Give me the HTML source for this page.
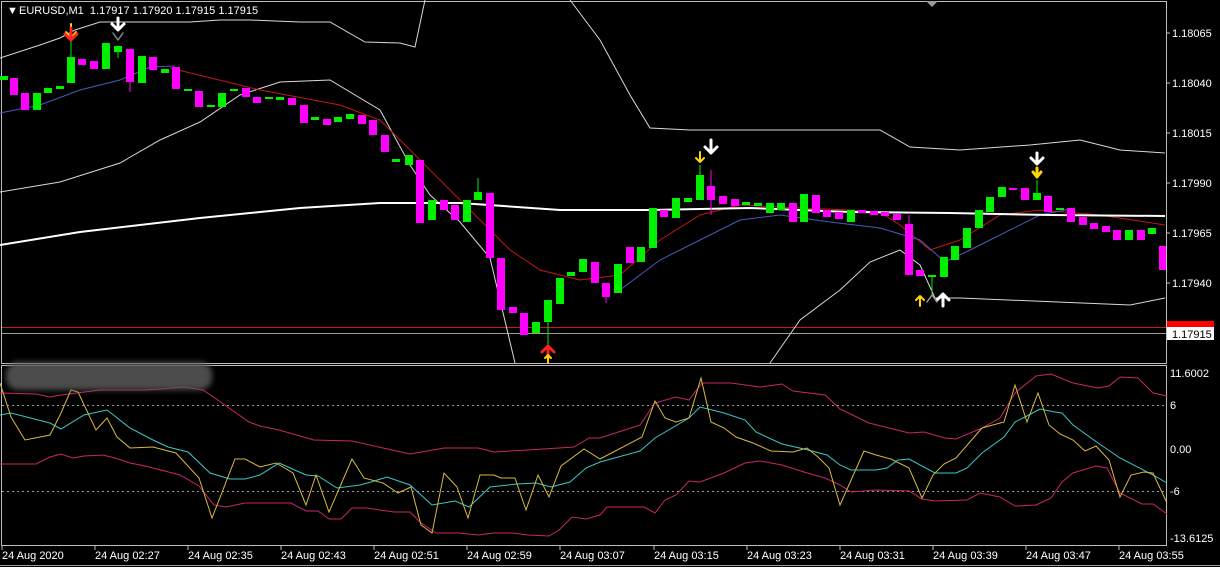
<!DOCTYPE html><html><head><meta charset="utf-8"><style>
html,body{margin:0;padding:0;background:#000;width:1220px;height:567px;overflow:hidden}
svg{display:block;font-family:"Liberation Sans",sans-serif}
.g{fill:#00f000}.m{fill:#ff00ff}
text{fill:#fff;font-size:11px}
</style></head><body>
<svg width="1220" height="567" viewBox="0 0 1220 567">
<rect width="1220" height="567" fill="#000"/>
<!-- frames -->
<rect x="1.5" y="1.5" width="1165" height="362" fill="none" stroke="#bdbdbd" stroke-width="1"/>
<rect x="1.5" y="365.5" width="1165" height="180" fill="none" stroke="#bdbdbd" stroke-width="1"/>
<polygon points="926,1 938,1 932,7" fill="#9a9a9a"/>
<!-- horizontal lines -->
<line x1="2" y1="327.5" x2="1166" y2="327.5" stroke="#d01818"/>
<line x1="2" y1="333.5" x2="1166" y2="333.5" stroke="#9a9a9a"/>
<!-- bands -->
<g fill="none" stroke-width="1">
<polyline stroke="#d8d8d8" points="0,58 40,45 60,38 75,30 100,22 190,22 220,20 250,20 300,22 330,22 365,42 400,43 415,47 425,0"/>
<polyline stroke="#d8d8d8" points="570,0 600,40 630,95 650,128 690,130 880,130 910,147 960,150 1030,145 1080,140 1120,150 1165,153"/>
<polyline stroke="#d8d8d8" points="0,192 60,182 120,163 160,140 200,122 240,95 280,82 330,80 380,110 410,165 430,195 460,222 490,258 500,300 515,363"/>
<polyline stroke="#d8d8d8" points="770,363 800,320 840,290 870,262 900,250 920,265 935,298 960,298 1130,305 1165,298"/>
<polyline stroke="#c01818" points="170,68 260,90 340,105 380,120 420,160 470,210 510,250 540,270 580,280 620,275 660,240 700,215 740,205 800,208 850,210 880,212 900,225 930,250 960,240 1000,215 1040,210 1100,215 1165,225"/>
<polyline stroke="#4a5ab8" points="0,113 40,105 80,90 120,80 150,67 175,66"/>
<polyline stroke="#4a5ab8" points="620,290 660,260 700,240 740,220 780,215 830,222 880,228 920,240 945,262 970,250 990,240 1040,215 1075,208"/>
<polyline stroke="#ffffff" stroke-width="2" points="0,245 80,232 200,218 300,208 380,203 460,203 560,210 650,210 750,208 850,212 950,213 1050,215 1165,216"/>
</g>
<!-- wicks -->
<g stroke-width="1">
<line x1="71" y1="35" x2="71" y2="57" stroke="#00f000"/>
<line x1="130" y1="82" x2="130" y2="92" stroke="#ff00ff"/>
<line x1="118" y1="52" x2="118" y2="58" stroke="#00f000"/>
<line x1="548" y1="322" x2="548" y2="345" stroke="#00f000"/>
<line x1="700" y1="165" x2="700" y2="175" stroke="#00f000"/>
<line x1="711" y1="170" x2="711" y2="215" stroke="#ff00ff"/>
<line x1="909" y1="215" x2="909" y2="224" stroke="#ff00ff"/>
<line x1="932" y1="277" x2="932" y2="295" stroke="#00f000"/>
<line x1="1037" y1="180" x2="1037" y2="193" stroke="#00f000"/>
<line x1="478" y1="178" x2="478" y2="192" stroke="#00f000"/>
<line x1="606" y1="297" x2="606" y2="303" stroke="#ff00ff"/>
</g>
<!-- candles -->
<g>
<rect class="g" x="0" y="76" width="8" height="4"/><rect class="m" x="10" y="78" width="8" height="17"/><rect class="m" x="21" y="93" width="8" height="17"/><rect class="g" x="33" y="93" width="8" height="17"/><rect class="g" x="44" y="88" width="8" height="5"/><rect class="g" x="56" y="86" width="8" height="3"/><rect class="g" x="67" y="57" width="8" height="26"/><rect class="m" x="78" y="59" width="8" height="6"/><rect class="m" x="90" y="61" width="8" height="8"/><rect class="g" x="102" y="43" width="8" height="26"/><rect class="g" x="114" y="46" width="8" height="6"/><rect class="m" x="126" y="49" width="8" height="33"/><rect class="g" x="138" y="56" width="8" height="27"/><rect class="m" x="149" y="57" width="8" height="13"/><rect class="g" x="161" y="69" width="8" height="4"/><rect class="m" x="172" y="67" width="8" height="22"/><rect class="g" x="184" y="89" width="8" height="2"/><rect class="m" x="195" y="91" width="8" height="16"/><rect class="g" x="207" y="105" width="8" height="2"/><rect class="g" x="218" y="93" width="8" height="14"/><rect class="g" x="230" y="89" width="8" height="2"/><rect class="m" x="242" y="88" width="8" height="9"/><rect class="m" x="253" y="97" width="8" height="6"/><rect class="g" x="265" y="97" width="8" height="2"/><rect class="g" x="276" y="97" width="8" height="3"/><rect class="m" x="288" y="98" width="8" height="7"/><rect class="m" x="300" y="105" width="8" height="18"/><rect class="g" x="311" y="117" width="8" height="3"/><rect class="m" x="323" y="119" width="8" height="6"/><rect class="g" x="334" y="117" width="8" height="5"/><rect class="g" x="346" y="114" width="8" height="5"/><rect class="m" x="358" y="115" width="8" height="9"/><rect class="m" x="369" y="120" width="8" height="15"/><rect class="m" x="381" y="135" width="8" height="17"/><rect class="g" x="392" y="159" width="8" height="3"/><rect class="g" x="405" y="155" width="8" height="10"/><rect class="m" x="416" y="160" width="8" height="63"/><rect class="g" x="428" y="200" width="8" height="20"/><rect class="m" x="440" y="200" width="8" height="10"/><rect class="m" x="451" y="205" width="8" height="15"/><rect class="g" x="463" y="200" width="8" height="22"/><rect class="g" x="474" y="192" width="8" height="8"/><rect class="m" x="486" y="193" width="8" height="65"/><rect class="m" x="497" y="258" width="8" height="52"/><rect class="m" x="509" y="307" width="8" height="6"/><rect class="m" x="520" y="313" width="8" height="22"/><rect class="g" x="532" y="322" width="8" height="11"/><rect class="g" x="544" y="300" width="8" height="22"/><rect class="g" x="556" y="278" width="8" height="26"/><rect class="g" x="567" y="272" width="8" height="4"/><rect class="g" x="579" y="259" width="8" height="13"/><rect class="m" x="591" y="262" width="8" height="21"/><rect class="m" x="602" y="283" width="8" height="14"/><rect class="g" x="614" y="264" width="8" height="29"/><rect class="m" x="626" y="247" width="8" height="16"/><rect class="g" x="637" y="247" width="8" height="15"/><rect class="g" x="649" y="208" width="8" height="40"/><rect class="m" x="660" y="210" width="8" height="7"/><rect class="g" x="672" y="198" width="8" height="20"/><rect class="g" x="684" y="198" width="8" height="4"/><rect class="g" x="696" y="175" width="8" height="25"/><rect class="m" x="707" y="186" width="8" height="14"/><rect class="m" x="719" y="196" width="8" height="8"/><rect class="m" x="731" y="199" width="8" height="7"/><rect class="g" x="742" y="202" width="8" height="3"/><rect class="g" x="754" y="203" width="8" height="3"/><rect class="g" x="766" y="203" width="8" height="10"/><rect class="g" x="777" y="203" width="8" height="7"/><rect class="m" x="789" y="203" width="8" height="19"/><rect class="g" x="800" y="194" width="8" height="28"/><rect class="m" x="812" y="195" width="8" height="18"/><rect class="m" x="823" y="210" width="8" height="7"/><rect class="m" x="835" y="212" width="8" height="7"/><rect class="g" x="847" y="210" width="8" height="12"/><rect class="m" x="858" y="210" width="8" height="3"/><rect class="m" x="870" y="211" width="8" height="4"/><rect class="m" x="881" y="212" width="8" height="4"/><rect class="m" x="893" y="214" width="8" height="6"/><rect class="m" x="905" y="224" width="8" height="51"/><rect class="m" x="916" y="270" width="8" height="6"/><rect class="g" x="928" y="275" width="8" height="2"/><rect class="g" x="940" y="257" width="8" height="20"/><rect class="g" x="951" y="246" width="8" height="14"/><rect class="g" x="963" y="228" width="8" height="20"/><rect class="g" x="975" y="210" width="8" height="18"/><rect class="g" x="986" y="197" width="8" height="15"/><rect class="g" x="998" y="187" width="8" height="10"/><rect class="m" x="1009" y="188" width="8" height="2"/><rect class="m" x="1021" y="188" width="8" height="12"/><rect class="g" x="1033" y="193" width="8" height="7"/><rect class="m" x="1044" y="196" width="8" height="16"/><rect class="g" x="1056" y="208" width="8" height="2"/><rect class="m" x="1067" y="208" width="8" height="14"/><rect class="m" x="1079" y="217" width="8" height="8"/><rect class="m" x="1090" y="223" width="8" height="6"/><rect class="m" x="1102" y="226" width="8" height="6"/><rect class="m" x="1113" y="230" width="8" height="10"/><rect class="g" x="1125" y="230" width="8" height="10"/><rect class="m" x="1137" y="230" width="8" height="10"/><rect class="g" x="1148" y="228" width="8" height="6"/><rect class="m" x="1159" y="246" width="7" height="24"/>
</g>
<!-- arrows -->
<g stroke-linecap="round" stroke-linejoin="round" fill="none">
<path d="M71 24 V38 M66 32 L71 38 L76 32" stroke="#ffd800" stroke-width="2"/>
<path d="M71 28 V40 M65 34 L71 40 L77 34" stroke="#ff2020" stroke-width="3"/>
<path d="M118 18 V30 M112 24 L118 30 L124 24" stroke="#fff" stroke-width="3"/>
<path d="M113 33 L118 40 L123 33" stroke="#888" stroke-width="1.5"/>
<path d="M700 152 V162 M696 158 L700 162 L704 158" stroke="#ffd800" stroke-width="2"/>
<path d="M711 140 V153 M705 147 L711 153 L717 147" stroke="#fff" stroke-width="3"/>
<path d="M1037 153 V164 M1031 158 L1037 164 L1043 158" stroke="#fff" stroke-width="3"/>
<path d="M1037 168 V177 M1033 172 L1037 177 L1041 172" stroke="#ffd800" stroke-width="3"/>
<path d="M548 346 V358 M542 352 L548 346 L554 352" stroke="#ff2020" stroke-width="3"/>
<path d="M548 355 V363 M545 358 L548 355 L551 358" stroke="#ffd800" stroke-width="2"/>
<path d="M920 296 V306 M916 300 L920 296 L924 300" stroke="#ffd800" stroke-width="2"/>
<path d="M943 294 V306 M937 300 L943 294 L949 300" stroke="#fff" stroke-width="3"/>
<path d="M927 302 L932 295 L937 302" stroke="#999" stroke-width="1.5"/>
</g>
<text x="7" y="14" font-size="11">&#9660;</text>
<text x="19" y="14" font-size="11">EURUSD,M1&#160;&#160;1.17917 1.17920 1.17915 1.17915</text>
<!-- price axis -->
<g font-size="11">
<text x="1172" y="37">1.18065</text><text x="1172" y="87">1.18040</text><text x="1172" y="137">1.18015</text><text x="1172" y="187">1.17990</text><text x="1172" y="237">1.17965</text><text x="1172" y="287">1.17940</text>
</g>
<g stroke="#bdbdbd"><line x1="1166" y1="33" x2="1170" y2="33"/><line x1="1166" y1="83" x2="1170" y2="83"/><line x1="1166" y1="133" x2="1170" y2="133"/><line x1="1166" y1="183" x2="1170" y2="183"/><line x1="1166" y1="233" x2="1170" y2="233"/><line x1="1166" y1="283" x2="1170" y2="283"/></g>
<rect x="1167" y="321" width="47" height="7" fill="#ff0000"/>
<rect x="1167" y="327" width="47" height="13" fill="#fff"/>
<text x="1172" y="338" style="fill:#000">1.17915</text>
<!-- sub window -->
<g stroke="#9a9a9a" stroke-dasharray="2,3"><line x1="2" y1="405.5" x2="1166" y2="405.5"/><line x1="2" y1="491.5" x2="1166" y2="491.5"/></g>
<g fill="none" stroke-width="1">
<polyline stroke="#c8266a" points="0,393 36,394 50,397 61,395 100,390 145,390 161,389 184,387 203,390 222,403 249,422 260,426 279,430 314,440 352,441 383,448 410,454 444,448 478,448 494,452 528,450 574,447 589,438 600,438 640,425 655,403 676,397 689,400 702,383 731,383 760,387 782,384 793,391 825,395 840,409 869,423 909,433 924,432 945,438 956,439 982,428 1000,418 1015,393 1036,376 1051,374 1073,383 1098,388 1109,386 1120,377 1138,378 1153,393 1167,396"/>
<polyline stroke="#c8266a" points="0,464 36,464 50,457 61,454 73,458 84,456 103,455 115,458 130,463 145,466 157,469 180,475 199,486 214,505 226,507 245,503 291,503 306,511 318,511 329,519 341,519 352,508 367,508 394,512 410,512 421,523 436,533 459,533 478,535 494,533 513,533 528,535 549,536 559,530 572,517 586,519 600,515 607,507 644,507 655,513 665,500 676,495 689,481 700,482 724,473 745,463 760,461 782,465 804,472 825,478 840,485 851,492 876,490 909,491 922,499 935,501 967,500 980,493 1000,497 1015,506 1036,505 1051,498 1062,482 1073,473 1096,466 1107,468 1120,493 1142,504 1153,504 1167,514"/>
<polyline stroke="#3cc8c8" points="0,415 11,413 50,423 61,429 84,415 107,410 130,428 153,440 168,447 188,452 210,473 230,479 245,479 260,475 279,463 306,475 318,476 337,488 360,485 371,482 387,477 410,485 432,505 455,501 469,507 490,487 517,484 536,483 551,487 570,482 586,468 600,462 640,451 655,438 689,418 700,407 724,413 745,420 756,432 782,444 804,449 827,455 840,465 851,470 876,470 887,468 898,460 909,459 935,473 956,473 967,468 982,453 1004,437 1015,422 1025,417 1040,409 1055,412 1062,413 1073,425 1098,443 1120,458 1153,475 1167,483"/>
<polyline stroke="#d8b840" points="0,383 11,417 25,440 50,435 61,413 71,390 78,392 96,430 107,418 117,437 130,448 153,447 176,453 199,478 212,518 235,459 245,459 260,467 276,463 293,473 306,505 316,475 329,512 352,459 364,478 383,483 398,493 411,487 421,525 432,533 444,473 457,487 468,518 480,475 494,475 501,478 515,478 526,510 538,475 549,497 561,466 584,449 600,459 642,437 655,401 665,418 676,422 689,418 701,378 711,422 724,428 736,437 753,443 771,451 793,452 807,448 818,457 829,468 840,505 864,451 876,455 891,459 909,468 922,498 933,475 944,464 956,458 982,428 1004,422 1015,385 1027,422 1038,393 1049,425 1060,434 1073,440 1085,451 1096,446 1109,460 1120,497 1131,475 1144,472 1153,473 1167,503"/>
</g>
<rect x="6" y="362" width="206" height="28" rx="12" fill="#5a5a5a" opacity="0.85" style="filter:blur(3px)"/>
<g font-size="11">
<text x="1170" y="377">11.6002</text><text x="1170" y="409">6</text><text x="1170" y="453">0.00</text><text x="1170" y="495">-6</text><text x="1170" y="542">-13.6125</text>
</g>
<!-- time axis -->
<g stroke="#bdbdbd"><line x1="2" y1="546" x2="2" y2="550"/><line x1="95" y1="546" x2="95" y2="550"/><line x1="188" y1="546" x2="188" y2="550"/><line x1="281" y1="546" x2="281" y2="550"/><line x1="374" y1="546" x2="374" y2="550"/><line x1="467" y1="546" x2="467" y2="550"/><line x1="560" y1="546" x2="560" y2="550"/><line x1="654" y1="546" x2="654" y2="550"/><line x1="747" y1="546" x2="747" y2="550"/><line x1="840" y1="546" x2="840" y2="550"/><line x1="933" y1="546" x2="933" y2="550"/><line x1="1026" y1="546" x2="1026" y2="550"/><line x1="1119" y1="546" x2="1119" y2="550"/></g>
<g font-size="11">
<text x="2" y="559">24 Aug 2020</text><text x="95" y="559">24 Aug 02:27</text><text x="188" y="559">24 Aug 02:35</text><text x="281" y="559">24 Aug 02:43</text><text x="374" y="559">24 Aug 02:51</text><text x="467" y="559">24 Aug 02:59</text><text x="560" y="559">24 Aug 03:07</text><text x="654" y="559">24 Aug 03:15</text><text x="747" y="559">24 Aug 03:23</text><text x="840" y="559">24 Aug 03:31</text><text x="933" y="559">24 Aug 03:39</text><text x="1026" y="559">24 Aug 03:47</text><text x="1119" y="559">24 Aug 03:55</text>
</g>
<line x1="0" y1="565.5" x2="1220" y2="565.5" stroke="#9a9a9a"/>
</svg>
</body></html>
